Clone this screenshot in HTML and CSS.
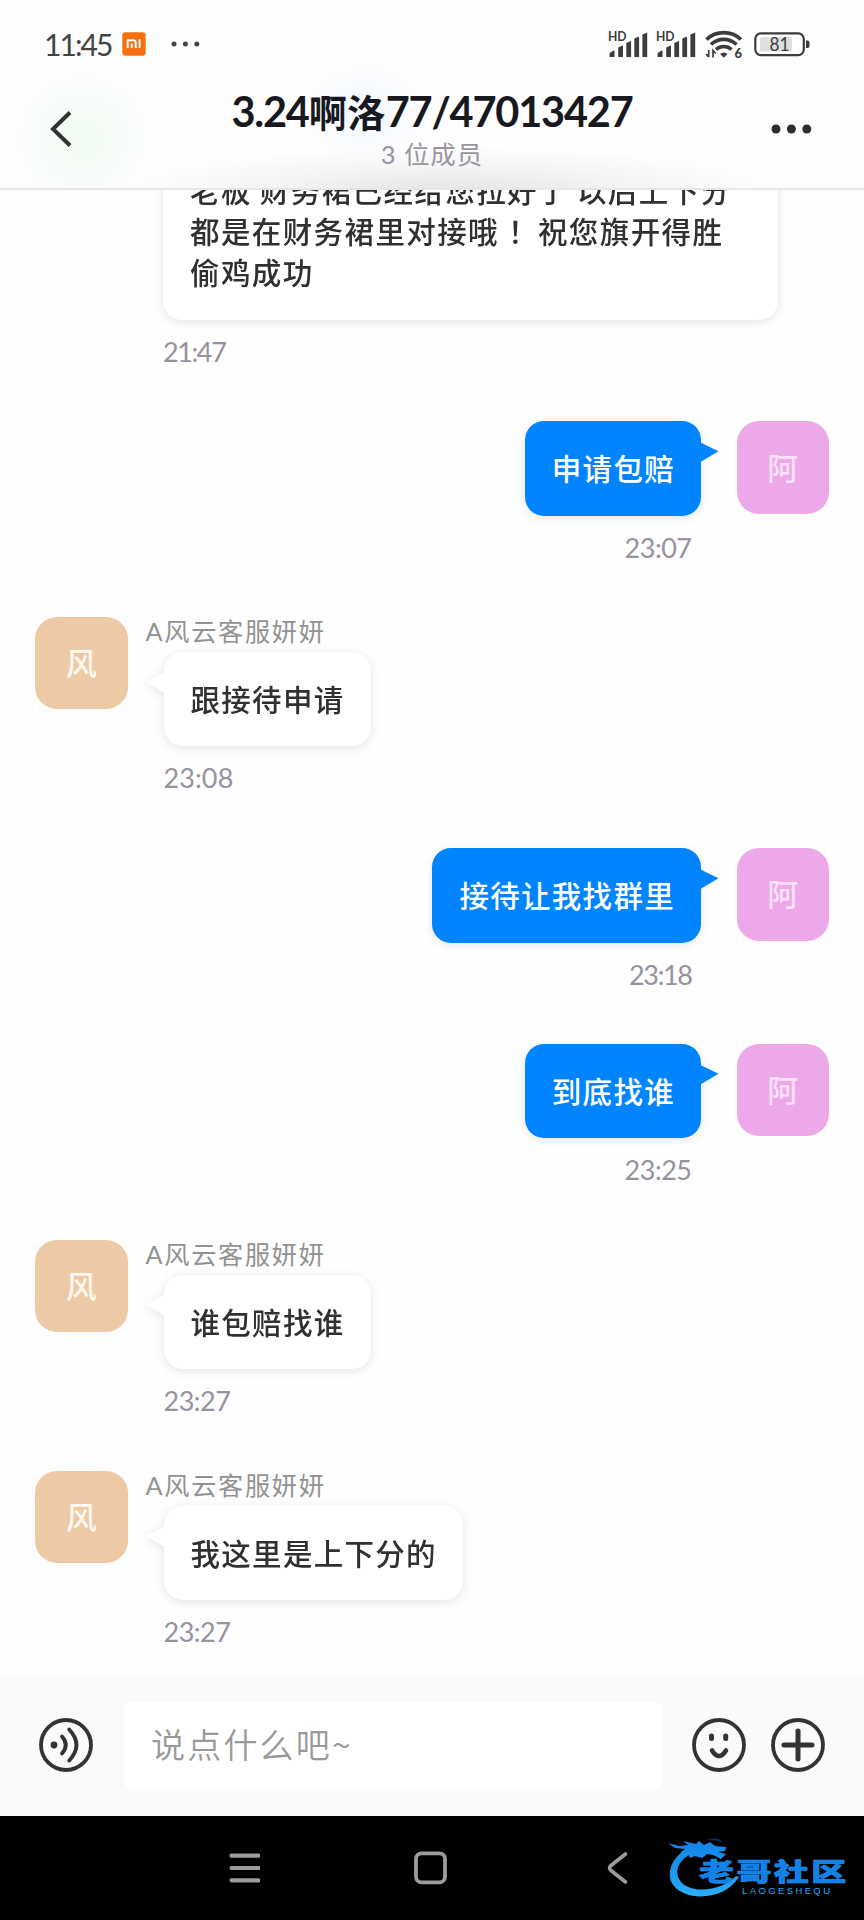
FILE: index.html
```html
<!DOCTYPE html>
<html lang="zh-CN">
<head>
<meta charset="utf-8">
<title>3.24啊洛77/47013427</title>
<link rel="stylesheet" href="styles.css">
</head>
<body>
<div class="phone">
  <header class="header">
    <div class="status">
      <span class="clock">11:45</span>
      <svg class="mi" width="24" height="24" viewBox="0 0 24 24"><rect width="23.4" height="23.4" x=".3" y=".3" rx="3" fill="#f5700f"/><path d="M5.700 16V8.200h5.600q2.400 0 2.400 2.500V16M9.700 11.500V16M17.600 7.300V16" fill="none" stroke="#fff" stroke-width="2"/></svg>
      <svg class="more-notes" width="30" height="6" viewBox="0 0 30 6"><g fill="#444"><circle cx="3" cy="3" r="2.500"/><circle cx="14.400" cy="3" r="2.500"/><circle cx="25.800" cy="3" r="2.500"/></g></svg>
      <div class="indicators">
        <svg width="40" height="28" viewBox="0 0 40 28"><text class="hd" x="0" y="11" textLength="18.500" lengthAdjust="spacingAndGlyphs">HD</text><path d="M1.500 27v-3q1-2.500 5-3.500v6.500zM10.200 27V17.500l4.800-2v11.500zM18.300 27V13l4.800-2v16zM26.300 27V8.500l4.800-2v20.500zM34.400 27V4.500l4.800-2v24.500z" fill="#3d3d3d"/></svg>
        <svg width="40" height="28" viewBox="0 0 40 28"><text class="hd" x="0" y="11" textLength="18.500" lengthAdjust="spacingAndGlyphs">HD</text><path d="M1.500 27v-3q1-2.500 5-3.500v6.500zM10.200 27V17.500l4.800-2v11.500zM18.300 27V13l4.800-2v16zM26.300 27V8.500l4.800-2v20.500zM34.400 27V4.500l4.800-2v24.500z" fill="#3d3d3d"/></svg>
        <svg width="38" height="30" viewBox="0 0 38 30"><g fill="none" stroke="#3d3d3d" stroke-width="3.600"><path d="M1.500 10.500a25 25 0 0 1 34.500 0M6 15.500a18.500 18.500 0 0 1 25.500 0M11 20.500a11.500 11.500 0 0 1 15.500 0"/><path d="M3.700 21v7M1 25l2.700 3M8 28.500v-7l2.800 3" stroke-width="1.700"/></g><path d="M15 25q3.800-3.200 7.600 0l-3.800 3.700z" fill="#3d3d3d"/><text class="wifi-num" x="29.500" y="28.500">6</text></svg>
        <svg width="56" height="25" viewBox="0 0 56 25"><rect x="1.300" y="1.300" width="48.500" height="21.800" rx="5.500" fill="#fff" stroke="#3d3d3d" stroke-width="2.200"/><rect x="6" y="5" width="32" height="14.500" rx="2" fill="#dfdfdf"/><path d="M52 8.500h1.500q2 0 2 2v3.500q0 2-2 2H52z" fill="#3d3d3d"/><text class="batt-num" x="15.500" y="19" textLength="20" lengthAdjust="spacingAndGlyphs">81</text></svg>
      </div>
    </div>
    <div class="titlebar">
      <svg class="back" width="24" height="38" viewBox="0 0 24 38"><path d="M21 2.500L4 19l17 16.500" fill="none" stroke="#333" stroke-width="4"/></svg>
      <div class="titles">
        <h1><span class="t1">3.24</span><span class="cjk">啊洛</span><span class="t2">77/47013427</span></h1>
        <p>3 位成员</p>
      </div>
      <svg class="menu" width="42" height="10" viewBox="0 0 42 10"><g fill="#2e2e2e"><circle cx="5" cy="5" r="4.500"/><circle cx="20.400" cy="5" r="4.500"/><circle cx="35.800" cy="5" r="4.500"/></g></svg>
    </div>
  </header>

  <main class="chat">
    <section class="msg other clipped">
      <div class="body"><div class="bubble long">老板 财务裙已经给您拉好了 以后上下分<br>都是在财务裙里对接哦<span class="mid">！</span> 祝您旗开得胜<br>偷鸡成功</div><time class="tight">21:47</time></div>
    </section>
    <section class="msg self">
      <div class="body"><div class="bubble">申请包赔</div><time>23:07</time></div>
      <div class="avatar">阿</div>
    </section>
    <section class="msg other">
      <div class="avatar">风</div>
      <div class="body"><div class="name">A风云客服妍妍</div><div class="bubble">跟接待申请</div><time class="wide">23:08</time></div>
    </section>
    <section class="msg self">
      <div class="body"><div class="bubble">接待让我找群里</div><time class="tight">23:18</time></div>
      <div class="avatar">阿</div>
    </section>
    <section class="msg self">
      <div class="body"><div class="bubble">到底找谁</div><time>23:25</time></div>
      <div class="avatar">阿</div>
    </section>
    <section class="msg other">
      <div class="avatar">风</div>
      <div class="body"><div class="name">A风云客服妍妍</div><div class="bubble">谁包赔找谁</div><time>23:27</time></div>
    </section>
    <section class="msg other">
      <div class="avatar">风</div>
      <div class="body"><div class="name">A风云客服妍妍</div><div class="bubble">我这里是上下分的</div><time>23:27</time></div>
    </section>
  </main>

  <footer class="composer">
    <svg width="54" height="54" viewBox="0 0 54 54"><g fill="none" stroke="#333" stroke-width="3.800" stroke-linecap="round"><circle cx="27" cy="27" r="25"/><path d="M23 18.500q7.500 8.500 0 17M30.200 11.500q14.500 15.500 0 31"/></g><circle cx="15" cy="27" r="3.400" fill="#333"/></svg>
    <div class="field">说点什么吧~</div>
    <svg width="54" height="54" viewBox="0 0 54 54"><g fill="none" stroke="#333" stroke-linecap="round"><circle cx="27" cy="27" r="25" stroke-width="3.800"/><path d="M19.500 18v2.500M33.700 18v2.500" stroke-width="5"/><path d="M20 32.500q7 11 14 0" stroke-width="4.600"/></g></svg>
    <svg class="plus" width="54" height="54" viewBox="0 0 54 54"><g fill="none" stroke="#333" stroke-linecap="round"><circle cx="27" cy="27" r="25" stroke-width="3.800"/><path d="M27 13v28M13 27h28" stroke-width="5"/></g></svg>
  </footer>

  <nav class="sysnav">
    <svg width="31" height="34" viewBox="0 0 31 34"><path d="M2.500 4.700h27M2.500 17h27M2.500 29.300h27" stroke="#9c9c9c" stroke-width="4.200" stroke-linecap="round"/></svg>
    <svg width="33" height="34" viewBox="0 0 33 34"><rect x="2" y="2.300" width="29" height="29" rx="5.500" fill="none" stroke="#9c9c9c" stroke-width="3.800"/></svg>
    <svg width="21" height="34" viewBox="0 0 21 34"><path d="M18.500 3L4 14.500q-3 2.500 0 5L18.500 31" fill="none" stroke="#9c9c9c" stroke-width="3.600" stroke-linecap="round" stroke-linejoin="round"/></svg>
    <svg class="logo" width="180" height="66" viewBox="0 0 180 66">
      <defs><linearGradient id="g" x1="0" y1="0" x2="0" y2="66" gradientUnits="userSpaceOnUse"><stop offset="0" stop-color="#1180e8"/><stop offset=".5" stop-color="#1b94ee"/><stop offset="1" stop-color="#2eb4ff"/></linearGradient></defs>
      <g fill="url(#g)">
        <path d="M18 15C3 22-3 41 6 51C19 67 57 65 71 42L68 41C57 53 30 60 15 49C4 40 9 23 28 17z"/>
        <path d="M0 8L11 11L20 10L15 6L28 9L31 6L36 10L42 7L47 11L58 12L57 16L50 17L58 19L53 24L45 20L39 19L34 23L27 21L22 23L20 18L12 18L17 14L7 13z"/>
        <path d="M39 5Q50 1 56 8Q49 5 39 5z" opacity=".35"/>
        <text class="brand" transform="translate(31 46) scale(1.43 1)" x="0" y="0" textLength="103">老哥社区</text>
        <text class="brand-sub" x="74" y="58.500" textLength="88">LAOGESHEQU</text>
      </g>
    </svg>
  </nav>
</div>
</body>
</html>
```
FILE: styles.css
```css
* { box-sizing: border-box; }
body { margin: 0; background: #fff; font-family: Lato, "Noto Sans CJK SC", sans-serif; }
.phone { width: 864px; height: 1920px; display: flex; flex-direction: column; overflow: hidden; background: #fefefe; }
svg { display: block; flex: none; }

.header {
  flex: none; height: 190px; border-bottom: 2px solid #e6e6e6;
  background:
    radial-gradient(ellipse 75px 75px at 82px 138px, #f1fbf3 0%, rgba(240,251,242,0) 100%),
    radial-gradient(ellipse 70px 55px at 365px 112px, #f3f8fe 0%, rgba(244,249,254,0) 100%),
    radial-gradient(ellipse 330px 46px at 450px 192px, #e4e4e4 0%, rgba(240,240,240,.7) 55%, rgba(255,255,255,0) 100%),
    #fefefe;
}
.status { height: 72px; padding: 16px 54px 0 44px; display: flex; align-items: center; }
.clock { width: 78px; font-size: 30px; line-height: 36px; letter-spacing: -1.900px; color: #444; }
.more-notes { margin-left: 25px; }
.indicators { margin-left: auto; display: flex; align-items: center; }
.indicators svg:nth-child(2) { margin-left: 8px; }
.indicators svg:nth-child(3) { margin-left: 9px; }
.indicators svg:nth-child(4) { margin-left: 11px; }
.hd { font: 700 12.500px Lato, sans-serif; fill: #3d3d3d; }
.wifi-num { font: 900 13px Lato, sans-serif; fill: #3d3d3d; }
.batt-num { font: 400 19px Lato, sans-serif; fill: #3d3d3d; }
.titlebar { height: 116px; padding: 0 51px 0 49px; display: grid; grid-template-columns: 24px 1fr 42px; align-items: start; }
.back { margin-top: 38px; }
.menu { margin-top: 52px; }
.titles { text-align: center; padding-left: 20px; }
.titles h1 { margin: 13px 0 0 0; font-size: 41.500px; line-height: 52px; font-weight: 700; color: #17191e; white-space: nowrap; display: flex; justify-content: center; }
.t1, .t2 { letter-spacing: -1.200px; }
.titles .cjk { font-family: "Noto Sans CJK SC", sans-serif; font-size: 38px; font-weight: 700; letter-spacing: .5px; }
.titles p { margin: 1px 0 0; font-size: 25.500px; line-height: 32px; letter-spacing: .9px; color: #9b95a0; font-weight: 400; }

.chat { flex: 1; min-height: 0; overflow: hidden; padding: 0 35px; }
.msg { display: flex; height: 195.700px; }
.msg.self { justify-content: flex-end; gap: 35.500px; }
.msg.other { height: 231.200px; gap: 18px; }
.msg.other.clipped { height: 231.300px; padding-left: 110px; }
.clipped .body { margin-top: -46px; }
.body { display: flex; flex-direction: column; align-items: flex-start; }
.self .body { align-items: flex-end; }
.avatar { width: 92.500px; height: 92.500px; padding-bottom: 3px; border-radius: 22px; display: flex; align-items: center; justify-content: center; font: 500 31px "Noto Sans CJK SC", sans-serif; color: #fbe0f8; background: #eca8e8; flex: none; }
.other .avatar { background: #edcaa5; color: #fff8ee; }
.name { height: 35px; font-size: 25.200px; line-height: 28px; letter-spacing: 1.700px; color: #929292; font-weight: 400; }
.bubble { position: relative; padding: 26px 26px 27.500px 27px; border-radius: 19px; font-family: "Noto Sans CJK SC", sans-serif; font-size: 29.500px; line-height: 41px; font-weight: 500; letter-spacing: 1.300px; white-space: nowrap; }
.mid { padding-left: 9px; margin-right: -9px; }
.self .bubble { background: #0084ff; color: #fff; box-shadow: 0 2px 8px rgba(0,0,0,.1); }
.other .bubble { margin-left: 18px; background: #fff; color: #303030; filter: drop-shadow(0 2px 5px rgba(0,0,0,.1)); }
.bubble.long { width: 615px; padding-top: 24.500px; padding-bottom: 28.500px; letter-spacing: 1.400px; }
.self .bubble::after { content: ""; position: absolute; left: calc(100% - 1px); top: 21px; width: 18.500px; height: 20px; background: #0084ff; clip-path: polygon(0 0, 100% 45%, 0 100%); }
.other .bubble::before { content: ""; position: absolute; right: calc(100% - 1px); top: 20px; width: 18.500px; height: 21px; background: #fff; clip-path: polygon(100% 0, 0 50%, 100% 100%); }
time { margin: 15px 9.500px 0 18px; font-size: 27px; line-height: 34px; letter-spacing: -.5px; color: #98919e; font-weight: 400; }
time.tight { letter-spacing: -1.400px; }
time.wide { letter-spacing: .1px; }

.composer { flex: none; height: 141.500px; padding: 0 39px; display: flex; align-items: center; background: #fafafa; }
.field { margin: 0 30px 0 31px; width: 537.500px; height: 87px; padding-left: 27px; border-radius: 8px; background: #fff; font: 350 34px/84px "Noto Sans CJK SC", sans-serif; letter-spacing: 2.200px; color: #999; }
.plus { margin-left: 25px; }

.sysnav { flex: none; height: 104px; padding-left: 229px; display: flex; align-items: center; background: #000; }
.sysnav svg:nth-child(2) { margin-left: 154px; }
.sysnav svg:nth-child(3) { margin-left: 160px; }
.sysnav .logo { margin-left: 40px; }
.brand { font: 900 24.500px "Noto Sans CJK SC", sans-serif; stroke: #1b94ee; stroke-width: .6px; }
.brand-sub { font: 400 9.500px "Liberation Sans", sans-serif; }
```
